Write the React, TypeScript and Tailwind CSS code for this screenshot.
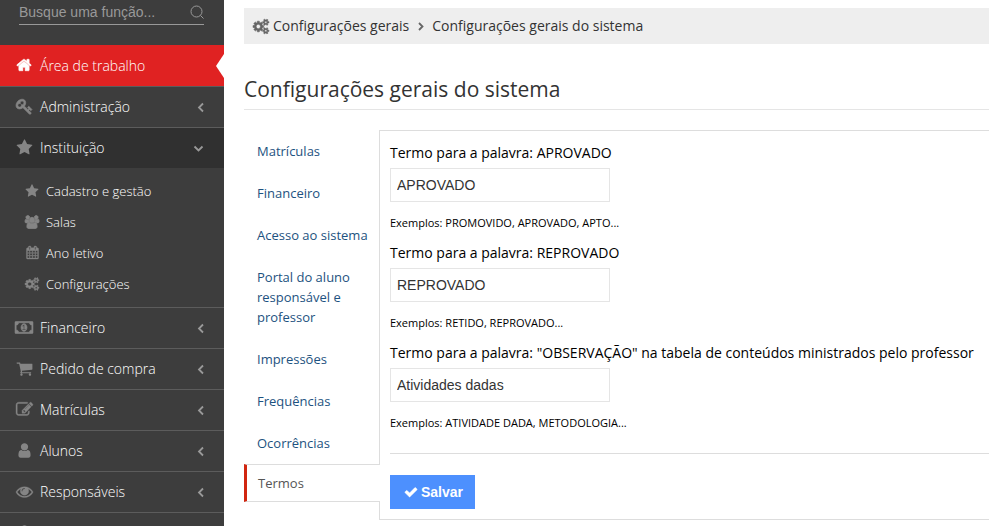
import { useState } from "react";

const wide = "0 0 1920 1792";
const square = "0 0 1792 1792";

const ICONS = {
  home: [square, 70, "M1472 992v480q0 26-19 45t-45 19h-384v-384h-256v384h-384q-26 0-45-19t-19-45v-480q0-1 .5-3t.5-3l575-474 575 474q1 2 1 6zm223-69l-62 74q-8 9-21 11h-3q-13 0-21-7l-692-577-692 577q-12 8-24 7-13-2-21-11l-62-74q-8-10-7-23.5t11-21.5l719-599q32-26 76-26t76 26l244 204v-195q0-14 9-23t23-9h192q14 0 23 9t9 23v408l219 182q10 8 11 21.5t-7 23.5z"],
  key: [square, 70, "M832 512q0-80-56-136t-136-56-136 56-56 136q0 42 19 83-41-19-83-19-80 0-136 56t-56 136 56 136 136 56 136-56 56-136q0-42-19-83 41 19 83 19 80 0 136-56t56-136zm851 704q0 17-49 66t-66 49q-9 0-28.5-16t-36.5-33-38.5-40-24.5-26l-96 96 220 220q28 28 28 68 0 42-39 81t-81 39q-40 0-68-28l-671-671q-176 131-365 131-163 0-265.5-102.5t-102.5-265.5q0-160 95-313t248-248 313-95q163 0 265.5 102.5t102.5 265.5q0 189-131 365l355 355 96-96q-3-3-26-24.5t-40-38.5-33-36.5-16-28.5q0-17 49-66t66-49q13 0 23 10 6 6 46 44.5t82 79.5 86.5 86 73 78 28.5 41z"],
  star: [square, 0, "M1728 647q0 22-26 48l-363 354 86 500q1 7 1 20 0 21-10.5 35.5t-30.5 14.5q-19 0-40-12l-449-236-449 236q-22 12-40 12-21 0-31.5-14.5t-10.5-35.5q0-6 2-20l86-500-364-354q-25-27-25-48 0-37 56-46l502-73 225-455q19-41 49-41t49 41l225 455 502 73q56 9 56 46z"],
  group: [wide, 110, "M593 896q-162 5-265 128h-134q-82 0-138-40.5t-56-118.5q0-353 124-353 6 0 43.5 21t97.5 42.5 119 21.5q67 0 133-23-5 37-5 66 0 159 93 293zm1071 637q0 120-73 189.5t-194 69.5h-874q-121 0-194-69.5t-73-189.5q0-53 3.5-103.5t14-109 26.5-108.5 43-97.5 62-81 85.5-53.5 111.5-20q10 0 43 21.5t73 48 107 48 135 21.5 135-21.5 107-48 73-48 43-21.5q61 0 111.5 20t85.5 53.5 62 81 43 97.5 26.5 108.5 14 109 3.5 103.5zm-1024-1277q0 106-75 181t-181 75-181-75-75-181 75-181 181-75 181 75 75 181zm704 384q0 159-112.5 271.5t-271.5 112.5-271.5-112.5-112.5-271.5 112.5-271.5 271.5-112.5 271.5 112.5 112.5 271.5zm576 225q0 78-56 118.5t-138 40.5h-134q-103-123-265-128 93-134 93-293 0-29-5-66 66 23 133 23 59 0 119-21.5t97.5-42.5 43.5-21q124 0 124 353zm-128-609q0 106-75 181t-181 75-181-75-75-181 75-181 181-75 181 75 75 181z"],
  calendar: [square, 50, "M192 1664h288v-288h-288v288zm352 0h320v-288h-320v288zm-352-352h288v-320h-288v320zm352 0h320v-320h-320v320zm-352-384h288v-288h-288v288zm736 736h320v-288h-320v288zm-384-736h320v-288h-320v288zm768 736h288v-288h-288v288zm-384-352h320v-320h-320v320zm-352-864v-288q0-13-9.5-22.5t-22.5-9.5h-64q-13 0-22.5 9.5t-9.5 22.5v288q0 13 9.5 22.5t22.5 9.5h64q13 0 22.5-9.5t9.5-22.5zm736 864h288v-320h-288v320zm-384-384h320v-288h-320v288zm384 0h288v-288h-288v288zm32-480v-288q0-13-9.5-22.5t-22.5-9.5h-64q-13 0-22.5 9.5t-9.5 22.5v288q0 13 9.5 22.5t22.5 9.5h64q13 0 22.5-9.5t9.5-22.5zm384-64v1280q0 52-38 90t-90 38h-1408q-52 0-90-38t-38-90v-1280q0-52 38-90t90-38h128v-96q0-66 47-113t113-47h64q66 0 113 47t47 113v96h384v-96q0-66 47-113t113-47h64q66 0 113 47t47 113v96h128q52 0 90 38t38 90z"],
  cogs: [wide, 70, "M896 896q0-106-75-181t-181-75-181 75-75 181 75 181 181 75 181-75 75-181zm768 512q0-52-38-90t-90-38-90 38-38 90q0 53 37.5 90.5t90.5 37.5 90.5-37.5 37.5-90.5zm0-1024q0-52-38-90t-90-38-90 38-38 90q0 53 37.5 90.5t90.5 37.5 90.5-37.5 37.5-90.5zm-384 421v185q0 10-7 19.5t-16 10.5l-155 24q-11 35-32 76 34 48 90 115 7 11 7 20 0 12-7 19-23 30-82.5 89.5t-78.5 59.5q-11 0-21-7l-115-90q-37 19-77 31-11 108-23 155-7 24-30 24h-186q-11 0-20-7.5t-10-17.5l-23-153q-34-10-75-31l-118 89q-7 7-20 7-11 0-21-8-144-133-144-160 0-9 7-19 10-14 41-53t47-61q-23-44-35-82l-152-24q-10-1-17-9.5t-7-19.5v-185q0-10 7-19.5t16-10.5l155-24q11-35 32-76-34-48-90-115-7-11-7-20 0-12 7-20 22-30 82-89t79-59q11 0 21 7l115 90q34-18 77-32 11-108 23-154 7-24 30-24h186q11 0 20 7.5t10 17.5l23 153q34 10 75 31l118-89q8-7 20-7 11 0 21 8 144 133 144 160 0 8-7 19-12 16-42 54t-45 60q23 48 34 82l152 23q10 2 17 10.5t7 19.5zm640 533v140q0 16-149 31-12 27-30 52 51 113 51 138 0 4-4 7-122 71-124 71-8 0-46-47t-52-68q-20 2-30 2t-30-2q-14 21-52 68t-46 47q-2 0-124-71-4-3-4-7 0-25 51-138-18-25-30-52-149-15-149-31v-140q0-16 149-31 13-29 30-52-51-113-51-138 0-4 4-7 4-2 35-20t59-34 30-16q8 0 46 46.5t52 67.5q20-2 30-2t30 2q51-71 92-112l6-2q4 0 124 70 4 3 4 7 0 25-51 138 17 23 30 52 149 15 149 31zm0-1024v140q0 16-149 31-12 27-30 52 51 113 51 138 0 4-4 7-122 71-124 71-8 0-46-47t-52-68q-20 2-30 2t-30-2q-14 21-52 68t-46 47q-2 0-124-71-4-3-4-7 0-25 51-138-18-25-30-52-149-15-149-31v-140q0-16 149-31 13-29 30-52-51-113-51-138 0-4 4-7 4-2 35-20t59-34 30-16q8 0 46 46.5t52 67.5q20-2 30-2t30 2q51-71 92-112l6-2q4 0 124 70 4 3 4 7 0 25-51 138 17 23 30 52 149 15 149 31z"],
  money: [wide, 60, "M768 1152h384v-96h-128v-448h-114l-148 137 77 80q42-37 55-57h2v288h-128v96zm512-256q0 70-21 142t-59.5 134-101.5 101-138 39-138-39-101.5-101-59.5-134-21-142 21-142 59.5-134 101.5-101 138-39 138 39 101.5 101 59.5 134 21 142zm512 256v-512q-106 0-181-75t-75-181h-1152q0 106-75 181t-181 75v512q106 0 181 75t75 181h1152q0-106 75-181t181-75zm128-832v1152q0 26-19 45t-45 19h-1792q-26 0-45-19t-19-45v-1152q0-26 19-45t45-19h1792q26 0 45 19t19 45z"],
  cart: [square, 0, "M704 1536q0 52-38 90t-90 38-90-38-38-90 38-90 90-38 90 38 38 90zm896 0q0 52-38 90t-90 38-90-38-38-90 38-90 90-38 90 38 38 90zm128-1088v512q0 24-16.5 42.5t-40.5 21.5l-1044 122q13 60 13 70 0 16-24 64h920q26 0 45 19t19 45-19 45-45 19h-1024q-26 0-45-19t-19-45q0-11 8-31.5t16-36 21.5-40 15.5-29.5l-177-823h-204q-26 0-45-19t-19-45 19-45 45-19h256q16 0 28.5 6.5t19.5 15.5 13 24.5 8 26 5.5 29.5 4.5 26h1201q26 0 45 19t19 45z"],
  edit: [square, 40, "M888 1184l116-116-152-152-116 116v56h96v96h56zm440-720q-16-16-33 1l-350 350q-17 17-1 33t33-1l350-350q17-17 1-33zm80 594v190q0 119-84.5 203.5t-203.5 84.5h-832q-119 0-203.5-84.5t-84.5-203.5v-832q0-119 84.5-203.5t203.5-84.5h832q63 0 117 25 15 7 18 23 3 17-9 29l-49 49q-14 14-32 8-23-6-45-6h-832q-66 0-113 47t-47 113v832q0 66 47 113t113 47h832q66 0 113-47t47-113v-126q0-13 9-22l64-64q15-15 35-7t20 29zm-96-738l288 288-672 672h-288v-288zm444 132l-92 92-288-288 92-92q28-28 68-28t68 28l152 152q28 28 28 68t-28 68z"],
  user: [square, 0, "M1536 1399q0 109-62.5 187t-150.5 78h-854q-88 0-150.5-78t-62.5-187q0-85 8.5-160.5t31.5-152 58.5-131 94-89 134.5-34.5q131 128 313 128t313-128q76 0 134.5 34.5t94 89 58.5 131 31.5 152 8.5 160.5zm-256-887q0 159-112.5 271.5t-271.5 112.5-271.5-112.5-112.5-271.5 112.5-271.5 271.5-112.5 271.5 112.5 112.5 271.5z"],
  eye: [square, 30, "M1664 960q-152-236-381-353 61 104 61 225 0 185-131.5 316.5t-316.5 131.5-316.5-131.5-131.5-316.5q0-121 61-225-229 117-381 353 133 205 333.5 326.5t434.5 121.5 434.5-121.5 333.5-326.5zm-720-384q0-20-14-34t-34-14q-125 0-214.5 89.5t-89.5 214.5q0 20 14 34t34 14 34-14 14-34q0-86 61-147t147-61q20 0 34-14t14-34zm848 384q0 34-20 69-140 230-376.5 368.5t-499.5 138.5-499.5-139-376.5-368q-20-35-20-69t20-69q140-229 376.5-368t499.5-139 499.5 139 376.5 368q20 35 20 69z"],
  check: [square, 60, "M1671 566q0 40-28 68l-724 724-136 136q-28 28-68 28t-68-28l-136-136-362-362q-28-28-28-68t28-68l136-136q28-28 68-28t68 28l294 295 656-657q28-28 68-28t68 28l136 136q28 28 28 68z"],
} as const;

type IconName = keyof typeof ICONS;

function Icon({ name, className }: { name: IconName; className: string }) {
  const [viewBox, weight, d] = ICONS[name];
  return (
    <svg
      viewBox={viewBox}
      className={`shrink-0 overflow-visible fill-current stroke-current ${className}`}
      strokeWidth={weight}
      aria-hidden="true"
    >
      <path d={d} />
    </svg>
  );
}

const CHEVRONS = {
  left: "M7 1.5L3 5.5l4 4",
  right: "M4 2l3.5 3.5L4 9",
  down: "M1.5 3.5l4 4 4-4",
};

function Chevron({ dir, className }: { dir: keyof typeof CHEVRONS; className: string }) {
  return (
    <svg viewBox="0 0 11 11" className={`size-[11px] shrink-0 fill-none stroke-current ${className}`} strokeWidth="1.8" aria-hidden="true">
      <path d={CHEVRONS[dir]} />
    </svg>
  );
}

function MenuRow({ icon, label, open }: { icon: IconName; label?: string; open?: boolean }) {
  return (
    <a
      href="#"
      className={`flex h-[41px] items-center border-t border-[#5c5c5c] pl-[14px] text-white ${open ? "bg-[#303030] pr-5" : "pr-[17px]"}`}
    >
      <span className="flex w-5 justify-center pb-0.5 text-[#858585]">
        <Icon name={icon} className={icon === "money" ? "h-[17px] w-[18px]" : "size-[17px]"} />
      </span>
      <span className="ml-1.5 flex-1">{label}</span>
      <Chevron dir={open ? "down" : "left"} className="text-[#999]" />
    </a>
  );
}

const SUBMENU: { icon: IconName; label: string }[] = [
  { icon: "star", label: "Cadastro e gestão" },
  { icon: "group", label: "Salas" },
  { icon: "calendar", label: "Ano letivo" },
  { icon: "cogs", label: "Configurações" },
];

function Sidebar() {
  return (
    <nav className="w-56 shrink-0 bg-[#3d3d3d] text-sm leading-5 font-light">
      <div className="h-[45px] pr-5 pl-[19px]">
        <div className="flex h-[25px] items-center border-b border-[#999]">
          <input
            type="text"
            aria-label="Busque uma função"
            placeholder="Busque uma função..."
            className="min-w-0 flex-1 bg-transparent font-['Liberation_Sans',Arial,sans-serif] text-sm font-normal text-white outline-none placeholder:text-[#999]"
          />
          <button type="button" aria-label="Buscar" className="text-[#999]">
            <svg viewBox="0 0 14 14" className="size-[14px] fill-none stroke-current" aria-hidden="true">
              <circle cx="6.5" cy="6.5" r="5.5" />
              <path d="M10.5 10.5l3 3" />
            </svg>
          </button>
        </div>
      </div>
      <a href="#" className="relative flex h-[41px] items-center bg-[#e02222] px-[14px] text-white">
        <span className="flex w-5 justify-center pb-0.5">
          <Icon name="home" className="size-4" />
        </span>
        <span className="ml-1.5">Área de trabalho</span>
        <svg viewBox="0 0 8 24" className="absolute top-[9px] right-0 h-6 w-2 fill-white" aria-hidden="true">
          <path d="M8 0v24L0 12z" />
        </svg>
      </a>
      <MenuRow icon="key" label="Administração" />
      <MenuRow icon="star" label="Instituição" open />
      <ul className="pt-[7px] pb-2 text-[13px]">
        {SUBMENU.map((item) => (
          <li key={item.label}>
            <a href="#" className="flex h-[31px] items-center pl-6 text-white">
              <span className="flex w-4 justify-center text-[#858585]">
                <Icon name={item.icon} className={item.icon === "calendar" ? "h-[13px] w-[15px]" : "h-[14px] w-[14px]"} />
              </span>
              <span className="ml-1.5">{item.label}</span>
            </a>
          </li>
        ))}
      </ul>
      <MenuRow icon="money" label="Financeiro" />
      <MenuRow icon="cart" label="Pedido de compra" />
      <MenuRow icon="edit" label="Matrículas" />
      <MenuRow icon="user" label="Alunos" />
      <MenuRow icon="eye" label="Responsáveis" />
      <MenuRow icon="user" />
    </nav>
  );
}

const TABS = [
  "Matrículas",
  "Financeiro",
  "Acesso ao sistema",
  "Portal do aluno responsável e professor",
  "Impressões",
  "Frequências",
  "Ocorrências",
  "Termos",
];

function Field({ id, label, initial, hint }: { id: string; label: string; initial: string; hint: string }) {
  const [value, setValue] = useState(initial);
  return (
    <div className="mb-[10px]">
      <label htmlFor={id} className="block text-sm leading-5">
        {label}
      </label>
      <input
        id={id}
        type="text"
        value={value}
        onChange={(e) => setValue(e.target.value)}
        className="mt-[5px] block h-[34px] w-[220px] border border-[#e5e5e5] bg-white px-[6px] font-['Liberation_Sans',Arial,sans-serif] text-sm text-[#333] outline-none"
      />
      <p className="mt-[11px] text-[11px] leading-5">{hint}</p>
    </div>
  );
}

export default function App() {
  return (
    <div className="flex h-screen overflow-hidden bg-white font-['Open_Sans',sans-serif] text-black">
      <Sidebar />
      <main className="min-w-0 flex-1 pt-2 pl-5">
        <div className="flex h-9 items-center bg-[#eee] pl-[9px] text-sm text-[#333]">
          <Icon name="cogs" className="h-[15px] w-4 text-[#666]" />
          <a href="#" className="ml-1">Configurações gerais</a>
          <Chevron dir="right" className="mx-1.5 text-[#666]" />
          <a href="#">Configurações gerais do sistema</a>
        </div>
        <h1 className="mt-[30px] border-b border-[#e5e5e5] pb-[5px] text-[21px] leading-[30px] text-[#333]">
          Configurações gerais do sistema
        </h1>
        <div className="mt-5 flex">
          <ul className="-mr-px w-[136px] shrink-0 text-[13px] leading-5">
            {TABS.map((tab) => (
              <li key={tab}>
                {tab === "Termos" ? (
                  <a href="#" className="relative block border-y border-l-[3px] border-y-[#ddd] border-l-[#d12610] bg-white py-2 pl-[11px] text-[#555]">
                    {tab}
                  </a>
                ) : (
                  <a href="#" className="block py-[11px] pr-[10px] pl-[13px] text-[#1d5280]">
                    {tab}
                  </a>
                )}
              </li>
            ))}
          </ul>
          <form className="min-w-0 flex-1 border-y border-l border-[#ddd] pt-3 pb-[10px] pl-[10px]">
            <Field id="aprovado" label="Termo para a palavra: APROVADO" initial="APROVADO" hint="Exemplos: PROMOVIDO, APROVADO, APTO..." />
            <Field id="reprovado" label="Termo para a palavra: REPROVADO" initial="REPROVADO" hint="Exemplos: RETIDO, REPROVADO..." />
            <Field
              id="observacao"
              label={'Termo para a palavra: "OBSERVAÇÃO" na tabela de conteúdos ministrados pelo professor'}
              initial="Atividades dadas"
              hint="Exemplos: ATIVIDADE DADA, METODOLOGIA..."
            />
            <hr className="mt-5 border-[#ddd]" />
            <button
              type="button"
              className="mt-[21px] flex h-[34px] items-center bg-[#4d90fe] pr-3 pl-[14px] font-['Liberation_Sans',Arial,sans-serif] text-sm font-bold text-white"
            >
              <Icon name="check" className="mr-[3px] size-[14px]" />
              Salvar
            </button>
          </form>
        </div>
      </main>
    </div>
  );
}
